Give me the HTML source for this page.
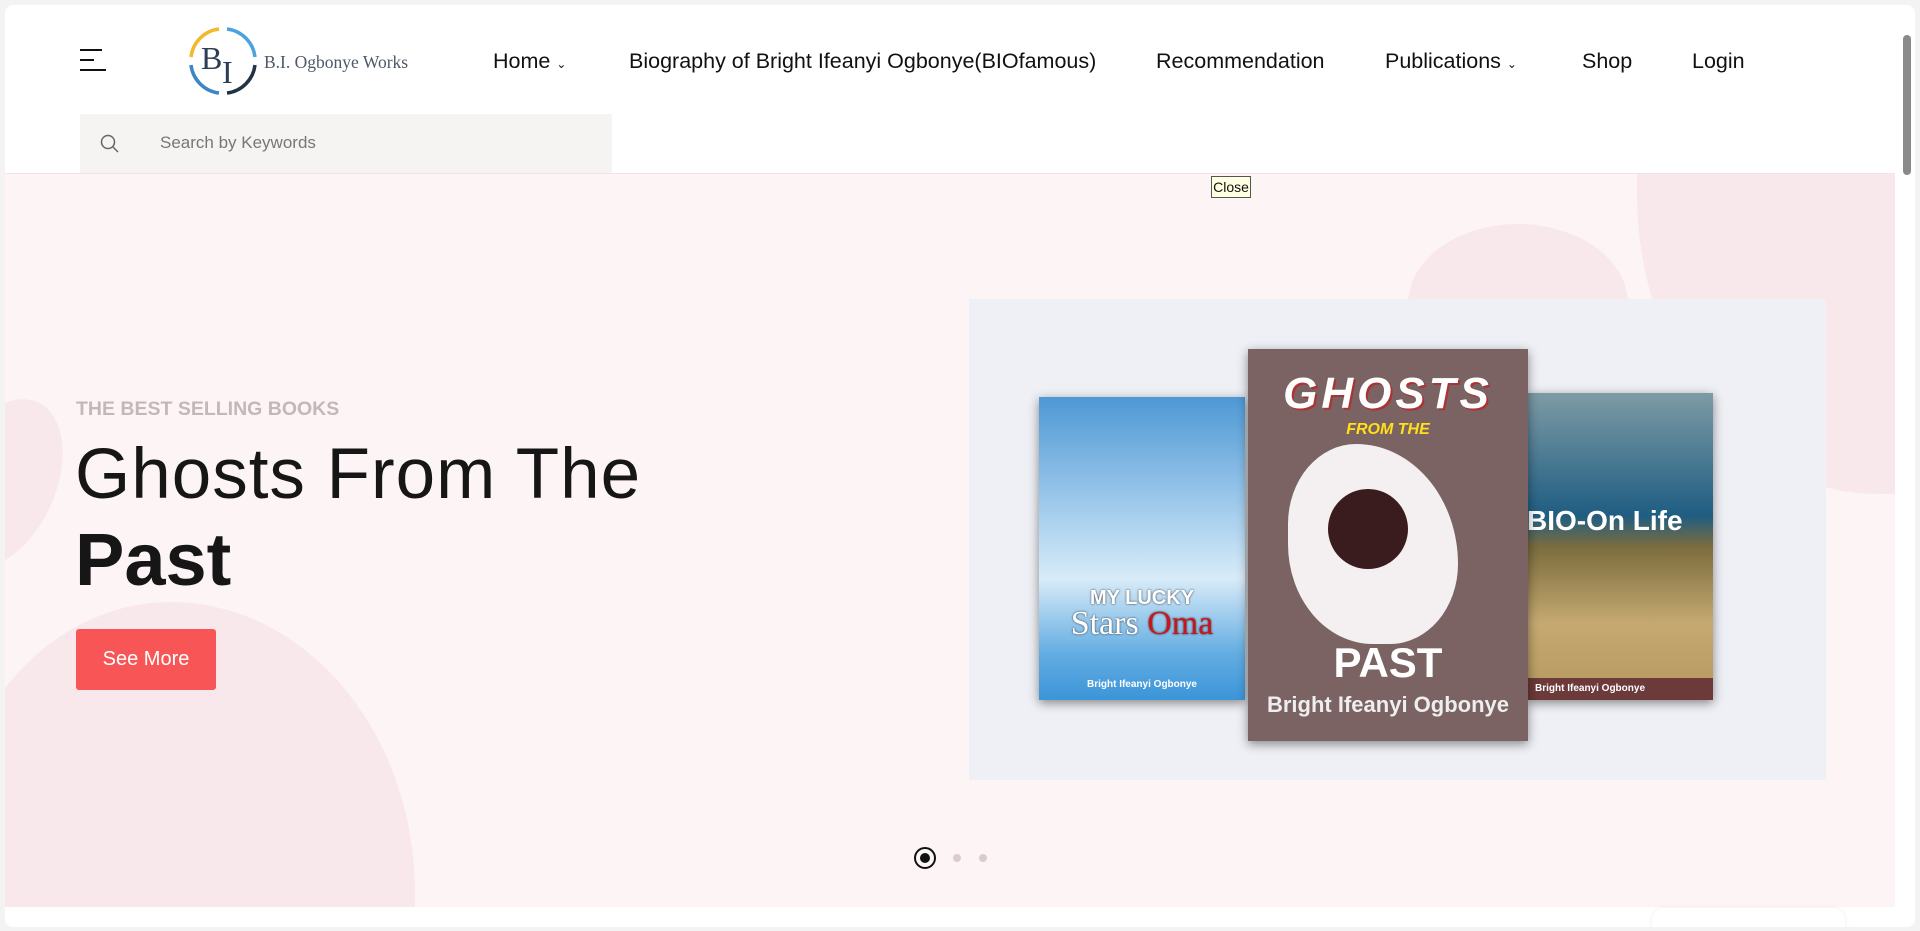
<!DOCTYPE html>
<html><head><meta charset="utf-8"><style>
*{margin:0;padding:0;box-sizing:border-box}
html,body{width:1920px;height:931px;overflow:hidden;background:#f3f3f3;font-family:"Liberation Sans",sans-serif}
.frame{position:absolute;left:5px;top:5px;width:1910px;height:922px;background:#fff;border-radius:8px;overflow:hidden}
.abs{position:absolute}
.nav a{position:absolute;top:44px;font-size:21.5px;color:#111;text-decoration:none;white-space:nowrap}
.hero{position:absolute;left:0;top:168px;width:1890px;height:734px;background:#fdf4f5;overflow:hidden;border-top:1px solid #f0e4e6}
.blob{position:absolute;background:#f8e8eb;border-radius:50%}
.book{position:absolute;box-shadow:0 3px 10px rgba(0,0,0,.45);overflow:hidden}
</style></head><body>
<div class="frame">
  <div class="abs" style="left:75px;top:44px;width:26px">
    <div style="height:2px;background:#111;width:22px;margin-bottom:8px"></div>
    <div style="height:2px;background:#111;width:14px;margin-bottom:8px"></div>
    <div style="height:2px;background:#111;width:26px"></div>
  </div>
  <svg class="abs" style="left:178px;top:16px" width="80" height="80" viewBox="0 0 80 80">
    <path d="M8 36 A32 32 0 0 1 36 8" stroke="#f5b72b" stroke-width="3.5" fill="none"/>
    <path d="M44 8 A32 32 0 0 1 72 36" stroke="#4aa3de" stroke-width="3.5" fill="none"/>
    <path d="M72 44 A32 32 0 0 1 44 72" stroke="#233347" stroke-width="3.5" fill="none"/>
    <path d="M36 72 A32 32 0 0 1 8 44" stroke="#3d86c6" stroke-width="3.5" fill="none"/>
    <text x="18" y="48" font-family="Liberation Serif" font-size="32" fill="#2c3e55">B</text>
    <text x="39" y="62" font-family="Liberation Serif" font-size="32" fill="#2c3e55">I</text>
  </svg>
  <div class="abs" style="left:259px;top:47px;font-family:'Liberation Serif',serif;font-size:17.5px;color:#4d5869">B.I. Ogbonye Works</div>
  <div class="nav">
    <a style="left:488px">Home <span style="font-size:12px">&#8964;</span></a>
    <a style="left:624px">Biography of Bright Ifeanyi Ogbonye(BIOfamous)</a>
    <a style="left:1151px">Recommendation</a>
    <a style="left:1380px">Publications <span style="font-size:12px">&#8964;</span></a>
    <a style="left:1577px">Shop</a>
    <a style="left:1687px">Login</a>
  </div>
  <div class="abs" style="left:75px;top:109px;width:532px;height:59px;background:#f5f4f2">
    <svg class="abs" style="left:20px;top:20px" width="20" height="20" viewBox="0 0 20 20"><circle cx="8" cy="8" r="6.5" stroke="#666" stroke-width="1.5" fill="none"/><path d="M13 13 L18 18" stroke="#666" stroke-width="1.5"/></svg>
    <div class="abs" style="left:80px;top:19px;font-size:17px;color:#777">Search by Keywords</div>
  </div>
  <div class="hero">
    <div class="blob" style="left:-60px;top:428px;width:470px;height:560px;border-radius:48% 52% 0 0"></div>
    <div class="blob" style="left:-60px;top:220px;width:110px;height:180px;transform:rotate(25deg)"></div>
    <div class="blob" style="left:1403px;top:50px;width:220px;height:160px;border-radius:50% 50% 0 0"></div>
    <div class="blob" style="left:1632px;top:-80px;width:320px;height:400px;border-radius:0 0 0 75%"></div>
    <div class="abs" style="left:71px;top:224px;font-size:19.5px;font-weight:bold;color:#c4b7b9">THE BEST SELLING BOOKS</div>
    <div class="abs" style="left:70px;top:257px;font-size:71px;color:#161616;letter-spacing:1px;line-height:88px">Ghosts From The</div>
    <div class="abs" style="left:70px;top:342px;font-size:74px;font-weight:bold;color:#161616;line-height:88px">Past</div>
    <div class="abs" style="left:71px;top:455px;width:140px;height:61px;background:#f85656;border-radius:3px;color:#fff;font-size:20px;line-height:61px;text-align:center">See More</div>
    <div class="abs" style="left:964px;top:125px;width:857px;height:481px;background:#eef0f5">
      <div class="book" style="left:70px;top:98px;width:206px;height:303px;background:linear-gradient(#4e98d5,#a9d0ee 40%,#d8ebf8 60%,#62ace2 85%,#3b95d8)">
        <div class="abs" style="left:0;top:190px;width:206px;text-align:center;font-weight:bold;color:#fff;font-size:20px;text-shadow:0 0 2px #333">MY LUCKY</div>
        <div class="abs" style="left:0;top:208px;width:206px;text-align:center;font-family:'Liberation Serif';color:#fff;font-size:34px;text-shadow:0 0 2px #333">Stars <span style="color:#c8161c">Oma</span></div>
        <div class="abs" style="left:0;top:282px;width:206px;text-align:center;color:#fff;font-size:10px;font-weight:bold">Bright Ifeanyi Ogbonye</div>
      </div>
      <div class="book" style="left:558px;top:94px;width:186px;height:307px;background:linear-gradient(#7d9ba5,#1f5d82 40%,#7b6c3e 50%,#c5a971 75%,#b59860)">
        <div class="abs" style="left:0;top:112px;width:186px;color:#fff;font-size:28px;font-weight:bold">BIO-On Life</div>
        <div class="abs" style="left:0;top:285px;width:186px;height:22px;background:#6c3a39;color:#fff;font-size:10px;font-weight:bold;line-height:22px;padding-left:8px">Bright Ifeanyi Ogbonye</div>
      </div>
      <div class="book" style="left:279px;top:50px;width:280px;height:392px;background:#7a6362">
        <div class="abs" style="left:0;top:20px;width:280px;text-align:center;color:#fff;font-size:44px;font-weight:bold;font-style:italic;letter-spacing:4px;text-shadow:2px 2px 0 #a33">GHOSTS</div>
        <div class="abs" style="left:0;top:72px;width:280px;text-align:center;color:#ffe01a;font-size:16px;font-weight:bold;font-style:italic">FROM THE</div>
        <div class="abs" style="left:40px;top:95px;width:170px;height:200px;background:#f4f0f2;border-radius:40% 60% 40% 50%"></div>
        <div class="abs" style="left:80px;top:140px;width:80px;height:80px;background:#3a1c1e;border-radius:50%"></div>
        <div class="abs" style="left:0;top:290px;width:280px;text-align:center;color:#fff;font-size:42px;font-weight:bold">PAST</div>
        <div class="abs" style="left:0;top:343px;width:280px;text-align:center;color:#eee;font-size:22px;font-weight:bold">Bright Ifeanyi Ogbonye</div>
      </div>
    </div>
    <div class="abs" style="left:909px;top:673px;width:22px;height:22px;border:2px solid #111;border-radius:50%"><div style="width:10px;height:10px;background:#111;border-radius:50%;margin:4px"></div></div>
    <div class="abs" style="left:948px;top:680px;width:8px;height:8px;background:#dccbcd;border-radius:50%"></div>
    <div class="abs" style="left:974px;top:680px;width:8px;height:8px;background:#dccbcd;border-radius:50%"></div>
  </div>
  <div class="abs" style="left:1206px;top:171px;width:40px;height:22px;background:#ffffe1;border:1px solid #555;font-size:14px;line-height:20px;text-align:center;color:#111">Close</div>
  <div class="abs" style="left:1647px;top:903px;width:193px;height:30px;background:#fff;border-radius:12px;box-shadow:0 0 4px rgba(0,0,0,.08)"></div>
  <div class="abs" style="left:1894px;top:0;width:16px;height:922px;background:#fff">
    <div style="position:absolute;left:4px;top:30px;width:8px;height:140px;background:#8a8a8a;border-radius:4px"></div>
  </div>
</div>
</body></html>
